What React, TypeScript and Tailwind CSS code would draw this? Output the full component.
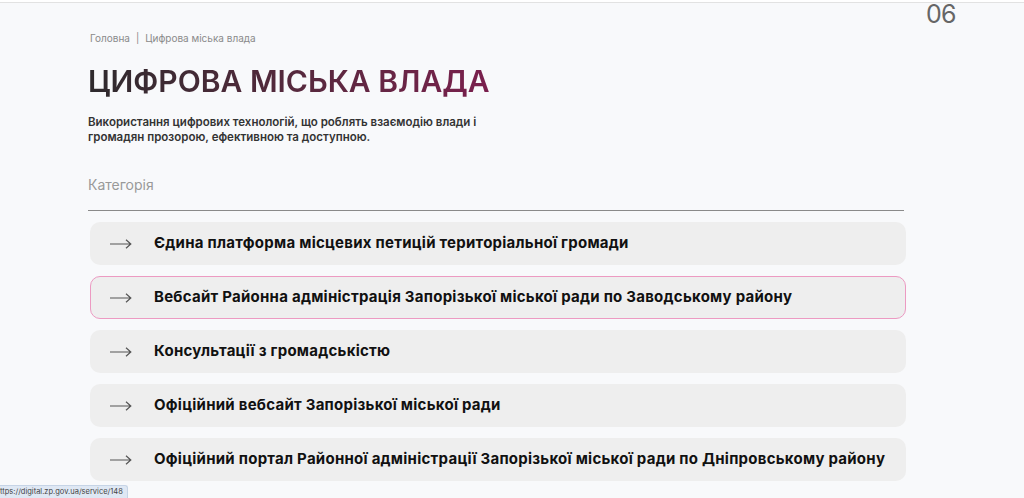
const items = [
  { title: "Єдина платформа місцевих петицій територіальної громади", active: false },
  { title: "Вебсайт Районна адміністрація Запорізької міської ради по Заводському району", active: true },
  { title: "Консультації з громадськістю", active: false },
  { title: "Офіційний вебсайт Запорізької міської ради", active: false },
  { title: "Офіційний портал Районної адміністрації Запорізької міської ради по Дніпровському району", active: false },
];

function Arrow() {
  return (
    <svg width="22" height="10" viewBox="0 0 22 10" fill="none" className="shrink-0">
      <path d="M0 5H20.5M16 0.8L20.8 5L16 9.2" stroke="#555" strokeWidth="1.2" />
    </svg>
  );
}

export default function App() {
  return (
    <div className="relative h-[498px] w-[1024px] overflow-hidden bg-[#f8f9fb] font-['Inter',sans-serif]">
      <div className="h-[3px] border-b border-[#e2e2e2] bg-white" />
      <div className="absolute right-[68px] top-0 text-[25px] font-normal leading-[28px] tracking-tight text-[#666]">
        06
      </div>

      <div className="ml-[88px] w-[818px] pt-[28px]">
        <div className="flex items-center gap-[6px] pl-[2px] text-[10px] text-[#8a8a8a]">
          <span>Головна</span>
          <span>|</span>
          <span>Цифрова міська влада</span>
        </div>

        <h1 className="mt-[17px] w-fit bg-gradient-to-r from-[#2e2a2d] to-[#7a1f4d] bg-clip-text text-[30px] font-semibold leading-[36px] text-transparent">
          ЦИФРОВА МІСЬКА ВЛАДА
        </h1>

        <p className="mt-[16px] w-[400px] text-[11.5px] font-semibold leading-[15px] text-[#333]">
          Використання цифрових технологій, що роблять взаємодію влади і громадян прозорою, ефективною та доступною.
        </p>

        <div className="mt-[29px] text-[14px] text-[#999]">Категорія</div>

        <div className="mt-[15px] h-px w-[816px] bg-[#8a8a8a]" />

        <div className="mt-[11px] flex flex-col gap-[11px] pl-[2px]">
          {items.map((item) => (
            <div
              key={item.title}
              className={`flex h-[43px] items-center gap-[22px] rounded-[10px] bg-[#eeeeee] pl-[19px] ${
                item.active ? "border border-[#ec9ac2]" : "border border-transparent"
              }`}
            >
              <Arrow />
              <span className="text-[15px] font-bold tracking-[0.25px] text-[#111]">{item.title}</span>
            </div>
          ))}
        </div>
      </div>

      <div className="absolute bottom-0 left-0 flex h-[13px] items-center rounded-tr-[3px] border-r border-t border-[#c6d4e6] bg-[#dfe8f4] pr-[4px] text-[7.5px] leading-none text-[#444]">
        ttps://digital.zp.gov.ua/service/148
      </div>
    </div>
  );
}
